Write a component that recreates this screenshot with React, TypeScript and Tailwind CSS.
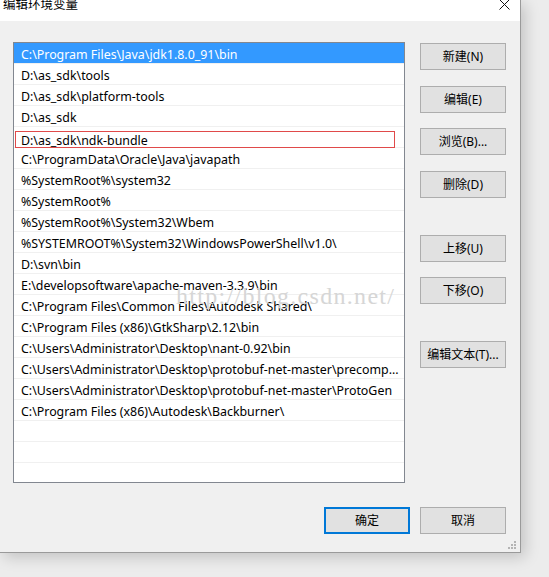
import React from 'react'

const paths = [
  'C:\\Program Files\\Java\\jdk1.8.0_91\\bin',
  'D:\\as_sdk\\tools',
  'D:\\as_sdk\\platform-tools',
  'D:\\as_sdk',
  'D:\\as_sdk\\ndk-bundle',
  'C:\\ProgramData\\Oracle\\Java\\javapath',
  '%SystemRoot%\\system32',
  '%SystemRoot%',
  '%SystemRoot%\\System32\\Wbem',
  '%SYSTEMROOT%\\System32\\WindowsPowerShell\\v1.0\\',
  'D:\\svn\\bin',
  'E:\\developsoftware\\apache-maven-3.3.9\\bin',
  'C:\\Program Files\\Common Files\\Autodesk Shared\\',
  'C:\\Program Files (x86)\\GtkSharp\\2.12\\bin',
  'C:\\Users\\Administrator\\Desktop\\nant-0.92\\bin',
  'C:\\Users\\Administrator\\Desktop\\protobuf-net-master\\precomp...',
  'C:\\Users\\Administrator\\Desktop\\protobuf-net-master\\ProtoGen',
  'C:\\Program Files (x86)\\Autodesk\\Backburner\\',
]

const font = { fontFamily: '"Noto Sans", "Noto Sans CJK SC", sans-serif' }

const SideButton = ({ label, className = '' }: { label: string; className?: string }) => (
  <button className={`w-[86px] h-[27px] bg-[#e1e1e1] border border-[#adadad] text-[12px] text-black flex items-center justify-center ${className}`}>
    {label}
  </button>
)

export default function App() {
  return (
    <div className="w-[549px] h-[577px] bg-[#ececec] overflow-hidden" style={font}>
      {/* Dialog */}
      <div className="w-[521px] h-[553px] bg-[#f0f0f0] border-r border-b border-[#9a9a9a] shadow-[4px_4px_14px_rgba(0,0,0,0.18)] flex flex-col relative">
        {/* Title bar */}
        <div className="h-[21px] bg-white flex items-start justify-between shrink-0">
          <span className="text-[12.5px] leading-none ml-[3px] -mt-[1px] text-black">编辑环境变量</span>
          <svg width="11" height="11" viewBox="0 0 11 11" className="mr-[10px] -mt-[1px]">
            <path d="M0.5 0.5 L10.5 10.5 M10.5 0.5 L0.5 10.5" stroke="#111" strokeWidth="1" />
          </svg>
        </div>

        {/* Body */}
        <div className="flex pt-[21px] pl-[13px]">
          {/* List */}
          <div className="w-[392px] h-[441px] bg-white border border-[#828790] overflow-hidden relative">
            {paths.map((p, i) => {
              if (i === 4) {
                return (
                  <div key={i} className="h-[21px] border-b border-[#f0f0f0] pl-[1px] pt-[4px]">
                    <div className="w-[380px] h-[17px] border border-[#e04a4a] pl-[5px] text-[12.4px] leading-[17px] text-black whitespace-nowrap">
                      {p}
                    </div>
                  </div>
                )
              }
              return (
                <div
                  key={i}
                  className={`h-[21px] border-b border-[#f0f0f0] pl-[7px] pt-[2px] text-[12.4px] leading-[20px] whitespace-nowrap ${
                    i === 0 ? 'bg-[#3399ff] text-white' : 'text-black'
                  }`}
                >
                  {p}
                </div>
              )
            })}
            <div className="h-[21px] border-b border-[#f0f0f0]" />
            <div className="h-[21px] border-b border-[#f0f0f0]" />
            <div className="h-[21px] border-b border-[#f0f0f0]" />

            {/* watermark */}
            <div
              className="absolute left-[162px] top-[239px] text-[24px] leading-[28px] text-[#d6d6d6] tracking-[1.3px] whitespace-nowrap pointer-events-none"
              style={{ fontFamily: '"Liberation Serif", serif' }}
            >
              http://blog.csdn.net/
            </div>
          </div>

          {/* Side buttons */}
          <div className="ml-[15px] mt-[1px] flex flex-col">
            <SideButton label="新建(N)" />
            <SideButton label="编辑(E)" className="mt-[16px]" />
            <SideButton label="浏览(B)..." className="mt-[15px]" />
            <SideButton label="删除(D)" className="mt-[16px]" />
            <SideButton label="上移(U)" className="mt-[37px]" />
            <SideButton label="下移(O)" className="mt-[15px]" />
            <SideButton label="编辑文本(T)..." className="mt-[37px]" />
          </div>
        </div>

        {/* Footer */}
        <div className="flex justify-end gap-[10px] pr-[14px] mt-[24px]">
          <button className="w-[86px] h-[27px] bg-[#e1e1e1] border-2 border-[#0078d7] text-[12px] text-black flex items-center justify-center">
            确定
          </button>
          <button className="w-[86px] h-[27px] bg-[#e1e1e1] border border-[#adadad] text-[12px] text-black flex items-center justify-center">
            取消
          </button>
        </div>

        {/* size grip */}
        <svg width="8" height="8" viewBox="0 0 8 8" className="absolute right-[4px] bottom-[3px]">
          <rect x="6" y="0" width="2" height="2" fill="#b4b4b4" />
          <rect x="3" y="3" width="2" height="2" fill="#b4b4b4" />
          <rect x="6" y="3" width="2" height="2" fill="#b4b4b4" />
          <rect x="0" y="6" width="2" height="2" fill="#b4b4b4" />
          <rect x="3" y="6" width="2" height="2" fill="#b4b4b4" />
          <rect x="6" y="6" width="2" height="2" fill="#b4b4b4" />
        </svg>
      </div>
    </div>
  )
}
